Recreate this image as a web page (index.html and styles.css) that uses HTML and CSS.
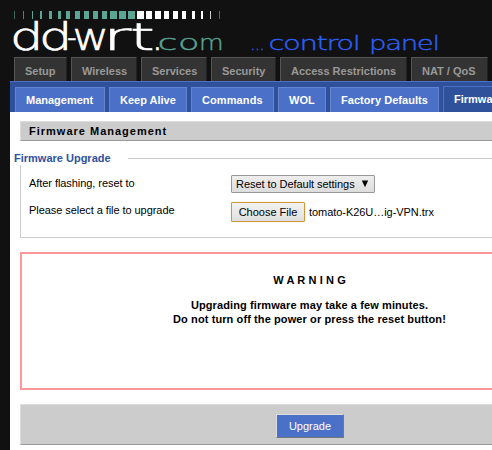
FILE: index.html
```html
<!DOCTYPE html>
<html lang="en">
<head>
<meta charset="utf-8">
<title>Firmware Management</title>
<link rel="stylesheet" href="styles.css">
</head>
<body>
<header class="banner">
<svg class="logo" width="482" height="57" viewBox="10 0 482 57" role="img" aria-label="dd-wrt.com control panel">
<g fill="#5aa594">
<rect x="14" y="11" width="1" height="8" opacity=".6"/><rect x="23" y="11" width="1" height="8" opacity=".8"/><rect x="32" y="11" width="1" height="8"/><rect x="40" y="11" width="2" height="8"/><rect x="49" y="11" width="3" height="8"/><rect x="58" y="11" width="3" height="8"/><rect x="66" y="11" width="4" height="8"/><rect x="75" y="11" width="5" height="8"/><rect x="84" y="11" width="5" height="8"/><rect x="93" y="11" width="5" height="8"/><rect x="102" y="11" width="5" height="8"/><rect x="110" y="11" width="7" height="8"/><rect x="119" y="11" width="7" height="8"/><rect x="128" y="11" width="7" height="8"/>
</g>
<g fill="#fff">
<rect x="137" y="11" width="7" height="8"/><rect x="146" y="11" width="6" height="8"/><rect x="155" y="11" width="6" height="8"/><rect x="164" y="11" width="5" height="8"/><rect x="173" y="11" width="5" height="8"/><rect x="182" y="11" width="4" height="8"/><rect x="192" y="11" width="3" height="8"/><rect x="201" y="11" width="2" height="8"/><rect x="210" y="11" width="1" height="8" opacity=".8"/><rect x="219" y="11" width="1" height="8" opacity=".35"/>
</g>
<g class="brand">
<text transform="translate(10 50) scale(1.42 1)" x="0 20.4">dd</text>
<text transform="translate(67 50) scale(.72 1)">-</text>
<text transform="translate(72.5 50) scale(1.2 1)">w</text>
<text transform="translate(103 50) scale(1.85 1)">r</text>
<text transform="translate(130 50) scale(1.7 1)">t</text>
<text transform="translate(151.5 50)">.</text>
</g>
<g class="domain">
<text transform="translate(157.5 50) scale(1.65 1)">c</text>
<text transform="translate(178 50) scale(1.6 1)">o</text>
<text transform="translate(199 50) scale(1.15 1)">m</text>
</g>
<g class="panel">
<text x="250" y="50" textLength="14" lengthAdjust="spacingAndGlyphs">...</text>
<text transform="translate(268.5 50) scale(1.5 1)">control</text>
<text transform="translate(369 50) scale(1.42 1)">panel</text>
</g>
</svg>
</header>
<nav class="tabs">
<span>Setup</span><span>Wireless</span><span>Services</span><span>Security</span><span>Access Restrictions</span><span>NAT / QoS</span>
</nav>
<nav class="subtabs">
<span>Management</span><span>Keep Alive</span><span>Commands</span><span>WOL</span><span>Factory Defaults</span><span class="current">Firmware Upgrade</span>
</nav>
<main class="content">
<h1>Firmware Management</h1>
<section class="group">
<h2><span>Firmware Upgrade</span></h2>
<div class="fields">
<div class="row reset"><span class="label">After flashing, reset to</span><span class="select">Reset to Default settings<svg width="8" height="8" viewBox="0 0 8 8"><path d="M.8 .5h6.4L4 7.3z"/></svg></span></div>
<div class="row"><span class="label">Please select a file to upgrade</span><span class="file">Choose File</span><span class="filename">tomato-K26U…ig-VPN.trx</span></div>
</div>
</section>
<section class="warning">
<p class="heading">W A R N I N G</p>
<p>Upgrading firmware may take a few minutes.<br>Do not turn off the power or press the reset button!</p>
</section>
<footer class="actions"><span class="upgrade">Upgrade</span></footer>
</main>
</body>
</html>
```

FILE: styles.css
```css
* { box-sizing: border-box; }
body {
  margin: 0;
  padding-left: 10px;
  width: 492px;
  height: 450px;
  overflow: hidden;
  background: #111;
  font: 11px/14px "Liberation Sans", Arial, sans-serif;
  color: #000;
}
h1, h2, p { margin: 0; font-size: 11px; }
.banner { height: 57px; }
.logo { display: block; }
.logo text { font-family: "DejaVu Sans", sans-serif; font-weight: 200; }
.brand { font-size: 37px; fill: #fff; stroke: #fff; stroke-width: .7px; }
.domain { font-size: 22px; fill: #5aa594; stroke: #5aa594; stroke-width: .4px; }
.panel { font-size: 19.5px; letter-spacing: -1px; fill: #2d62ff; stroke: #2d62ff; stroke-width: .3px; }

.tabs, .subtabs { display: flex; gap: 4px; white-space: nowrap; font-weight: bold; }
.tabs { height: 24px; padding-left: 4px; }
.tabs span {
  flex: none;
  width: 66px;
  height: 24px;
  padding: 6px 0 0 10px;
  background: #333;
  border: 1px solid #555;
  border-right-color: #222;
  border-bottom: 0;
  color: #999;
}
.tabs span:nth-child(1) { width: 53px; }
.tabs span:nth-child(4) { width: 65px; }
.tabs span:nth-child(5) { width: 127px; }
.tabs span:nth-child(6) { width: 77px; }
.subtabs {
  height: 31px;
  padding-left: 5px;
  align-items: flex-end;
  overflow: hidden;
  background: #2f519c;
  border-top: 1px solid #4a70c8;
}
.subtabs span {
  flex: none;
  height: 25px;
  padding: 5px 0 0 10px;
  background: #4a70c8;
  border: 1px solid #6585d0;
  border-bottom: 0;
  color: #fff;
}
.subtabs span:nth-child(1) { width: 90px; }
.subtabs span:nth-child(2) { width: 78px; }
.subtabs span:nth-child(3) { width: 83px; letter-spacing: .1px; }
.subtabs span:nth-child(4) { width: 48px; }
.subtabs span:nth-child(5) { width: 109px; letter-spacing: .05px; }
.subtabs .current { height: 26px; background: #2f519c; border-color: #4a70c8; }

.content { height: 338px; padding: 9px 0 0 10px; background: #fff; }
h1 {
  height: 20px;
  padding: 2px 8px 0;
  background: #ccc;
  border: 1px solid #ddd;
  border-width: 1px 0 1px 1px;
  border-bottom-color: #999;
  letter-spacing: 1px;
}
.group { margin-top: 10px; }
h2 { display: flex; align-items: center; height: 14px; margin-left: -6px; color: #2f519c; }
h2 span { width: 114px; }
h2::after { content: ""; flex: 1; height: 1px; background: #ccc; }
.fields {
  height: 73px;
  padding: 10px 0 0 8px;
  border: solid #ccc;
  border-width: 0 0 1px 1px;
}
.row { display: flex; align-items: flex-start; height: 27px; white-space: nowrap; }
.row .filename { margin-top: 3px; letter-spacing: -.05px; }
.row .label { width: 202px; margin-top: 1px; letter-spacing: -.06px; }
.row .select {
  display: flex;
  align-items: center;
  justify-content: space-between;
  width: 144px;
  height: 18px;
  padding: 0 5px 0 4px;
  border: 1px solid #999;
  border-radius: 1px;
  background: linear-gradient(#eee, #ddd);
  letter-spacing: -.05px;
}
.row .file {
  width: 74px;
  height: 20px;
  margin-right: 4px;
  padding: 2px 0;
  border: 1px solid #c99a3a;
  border-radius: 1px;
  background: linear-gradient(#f2f2f2, #e0e0e0);
  box-shadow: 0 0 1px #d9b266;
  text-align: center;
}
.warning {
  width: 662px;
  height: 138px;
  margin-top: 14px;
  padding: 19px 83px 0 0;
  border: 2px solid #f99;
  text-align: center;
  font-weight: bold;
  letter-spacing: .1px;
}
.warning .heading { margin-bottom: 11px; }
.actions {
  height: 41px;
  margin-top: 14px;
  padding: 9px 0 0 255px;
  background: #ccc;
  border: 1px solid #ddd;
  border-width: 1px 0 1px 1px;
  border-bottom-color: #999;
}
.upgrade {
  display: block;
  width: 68px;
  height: 24px;
  padding-top: 4px;
  background: #4a70c8;
  border: 1px solid #ddd;
  border-right-color: #777;
  border-bottom-color: #777;
  color: #fff;
  text-align: center;
}
```
